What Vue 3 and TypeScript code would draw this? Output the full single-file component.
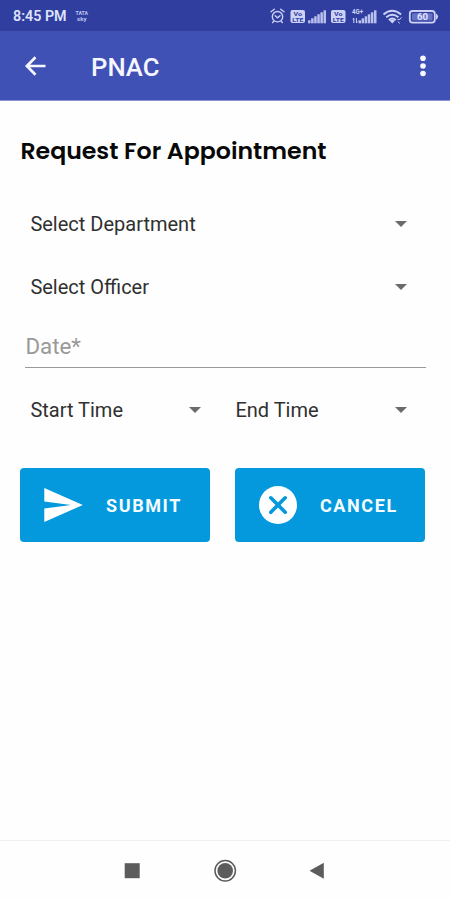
<script setup lang="ts">
import { ref } from 'vue'

const departments = ref<string>('Select Department')
const officer = ref<string>('Select Officer')
const startTime = ref<string>('Start Time')
const endTime = ref<string>('End Time')
const bars: number[] = [3, 5, 7, 9, 11, 13]
</script>

<template>
  <div class="screen">
    <div class="status">
      <span class="clock">8:45 PM</span>
      <svg class="carrier" width="14" height="14" viewBox="0 0 14 14">
        <text x="0.5" y="5.5" textLength="12.5" lengthAdjust="spacingAndGlyphs" class="tiny">TATA</text>
        <text x="2" y="11.5" textLength="9.5" lengthAdjust="spacingAndGlyphs" class="tiny">sky</text>
      </svg>
      <svg class="tray" width="170" height="20" viewBox="0 0 170 20">
        <g fill="none" stroke="#cdd2f6" stroke-width="1.4" stroke-linecap="round">
          <circle cx="7.5" cy="10.7" r="5.2" />
          <path d="M1 5.8 4.3 3.2M14 5.8 10.7 3.2M5.2 9.8l2.4 2 2.4-2M3.6 15.5l-1 1M11.4 15.5l1 1" />
        </g>
        <g v-for="x in [20.5, 61]" :key="x" :transform="`translate(${x} 4)`">
          <rect width="14.5" height="13" rx="2" fill="#cdd2f6" />
          <text x="3" y="5.9" textLength="8.5" lengthAdjust="spacingAndGlyphs" class="badge-text">Vo</text>
          <text x="1.8" y="11.8" textLength="11" lengthAdjust="spacingAndGlyphs" class="badge-text">LTE</text>
        </g>
        <g fill="#b9c0ee">
          <rect v-for="(h, i) in bars" :key="i" :x="38 + i * 3.1" :y="17.3 - h" width="2.5" :height="h" />
          <rect v-for="(h, i) in bars" :key="`b${i}`" :x="88.5 + i * 3.1" :y="17.3 - h" width="2.5" :height="h" />
        </g>
        <text x="82" y="7.5" textLength="11" lengthAdjust="spacingAndGlyphs" class="net">4G+</text>
        <path d="M83.8 17v-5M83.8 12l-1 1.4M86.4 12v5M86.4 17l1-1.4" stroke="#cdd2f6" stroke-width="1" fill="none" />
        <g fill="none" stroke="#cdd2f6" stroke-width="1.9">
          <path d="M113.5 8.4q8.7-7.2 17.6 0" />
          <path d="M116.2 11.2q6.1-4.8 12.2 0" />
          <path d="M118.8 13.9q3.5-2.7 7 0" />
          <path d="M127.5 13.4h2.4l1.6-2M127.8 15.5l2 1.8" stroke-width="1" />
        </g>
        <path d="m119.5 14.5 2.8 3 2.8-3q-2.8-2-5.6 0z" fill="#cdd2f6" />
        <rect x="139.8" y="5" width="25" height="11.6" rx="2.8" fill="none" stroke="#cdd2f6" stroke-width="1.8" />
        <rect x="142" y="7.2" width="20.5" height="7.2" rx="1" fill="#6672c6" />
        <path d="M166 7.6q4.2 3.2 0 6.4z" fill="#cdd2f6" />
        <text x="147" y="14.2" textLength="11" lengthAdjust="spacingAndGlyphs" class="power">60</text>
      </svg>
    </div>

    <header class="bar">
      <svg class="back" width="22" height="20" viewBox="0 0 22 20">
        <path d="M20.5 10H2.2M10.5 1.3 1.9 10l8.6 8.7" fill="none" stroke="#f5f6ff" stroke-width="2.7" />
      </svg>
      <h1>PNAC</h1>
      <svg class="more" width="6" height="22" viewBox="0 0 6 22" fill="#f8f9ff">
        <circle cx="3" cy="3.3" r="2.8" /><circle cx="3" cy="11" r="2.8" /><circle cx="3" cy="18.5" r="2.8" />
      </svg>
    </header>

    <main>
      <h2>Request For Appointment</h2>
      <div class="select department"><span>{{ departments }}</span><i /></div>
      <div class="select officer"><span>{{ officer }}</span><i /></div>
      <div class="date">Date*</div>
      <div class="times">
        <div class="select"><span>{{ startTime }}</span><i /></div>
        <div class="select"><span>{{ endTime }}</span><i /></div>
      </div>
      <div class="actions">
        <button type="button">
          <svg width="40" height="40" viewBox="0 0 40 40">
            <path d="M1.3 3 39.8 20 1.3 37V23.6L28 20 1.3 16.4z" fill="#fff" />
          </svg>
          <span class="submit">SUBMIT</span>
        </button>
        <button type="button">
          <svg width="40" height="40" viewBox="0 0 40 40">
            <circle cx="20" cy="20" r="19" fill="#fff" />
            <path d="m12.8 12.8 14.4 14.4M27.2 12.8 12.8 27.2" stroke="#0399dc" stroke-width="3.6" stroke-linecap="round" />
          </svg>
          <span class="cancel">CANCEL</span>
        </button>
      </div>
    </main>

    <nav>
      <svg width="450" height="58" viewBox="0 0 450 58" fill="#5c5c5c">
        <rect x="124.7" y="22.2" width="15" height="15" />
        <circle cx="225.2" cy="29.7" r="7.8" />
        <circle cx="225.2" cy="29.7" r="10.2" fill="none" stroke="#5c5c5c" stroke-width="1.5" />
        <path d="M309.5 29.7 323.8 21.7v16z" />
      </svg>
    </nav>
  </div>
</template>

<style>
body { margin: 0; background: #fff; }
</style>

<style scoped>
.screen {
  width: 450px;
  height: 900px;
  display: flex;
  flex-direction: column;
  background: #fefefe;
  font-family: Roboto, "Liberation Sans", sans-serif;
  overflow: hidden;
}
.status {
  height: 31px;
  box-sizing: border-box;
  background: #303f9f;
  display: flex;
  align-items: center;
  padding-left: 13px;
}
.clock { width: 54px; color: #dfe3fc; font-size: 14.3px; font-weight: 600; line-height: 16px; white-space: nowrap; }
.carrier { margin: 0 0 0 8px; }
.tray { margin-left: 181px; flex: none; }
.tiny { font-size: 6px; font-weight: 700; fill: #bfc6f3; }
.badge-text { font-size: 6px; font-weight: 700; fill: #303f9f; }
.net { font-size: 7px; font-weight: 700; fill: #cdd2f6; }
.power { font-size: 9.5px; font-weight: 700; fill: #e4e7ff; }
.bar {
  height: 69px;
  background: #3f51b5;
  box-shadow: 0 1px #8c96d2;
  display: flex;
  align-items: center;
  padding: 1px 24px 0 25px;
  box-sizing: border-box;
}
h1 { margin: 0 auto 0 44px; color: #f5f6ff; font-size: 25.7px; font-weight: 500; line-height: 30px; padding-top: 2px; }
main { flex: 1; padding: 35px 24.4px 0 20.4px; }
h2 { margin: 0; font-family: Poppins, Inter, sans-serif; font-size: 23.65px; font-weight: 600; line-height: 32px; color: #080808; white-space: nowrap; }
.select {
  display: flex;
  align-items: center;
  justify-content: space-between;
  height: 30px;
  padding: 0 19px 0 10px;
  font-size: 20px;
  color: #303030;
  white-space: nowrap;
}
.select i { border: 6px solid transparent; border-top-color: #6b6b6b; border-bottom: 0; }
.department { margin-top: 42px; }
.officer { margin-top: 33px; }
.date {
  margin: 30px 0 0 5px;
  height: 35px;
  border-bottom: 1.5px solid #999;
  font-size: 22.3px;
  line-height: 28px;
  color: #999;
}
.times { display: grid; grid-template-columns: 205px 1fr; margin-top: 27px; }
.times .select:first-child { padding-right: 19px; margin-right: 5px; }
.actions { display: flex; gap: 25px; margin-top: 43px; }
button {
  width: 190px;
  height: 74px;
  border: 0;
  border-radius: 4px;
  background: #0399dc;
  display: flex;
  align-items: center;
  padding: 0 0 0 22.6px;
  color: #f5fcff;
  font: 700 18px/22px Roboto, sans-serif;
}
button span { padding-top: 1px; }
.submit { margin-left: 23px; letter-spacing: 1.6px; }
.cancel { margin-left: 22px; letter-spacing: 1.6px; }
nav { height: 58px; border-top: 1px solid #f1f1f1; margin-bottom: 1px; }
nav svg { display: block; }
</style>
